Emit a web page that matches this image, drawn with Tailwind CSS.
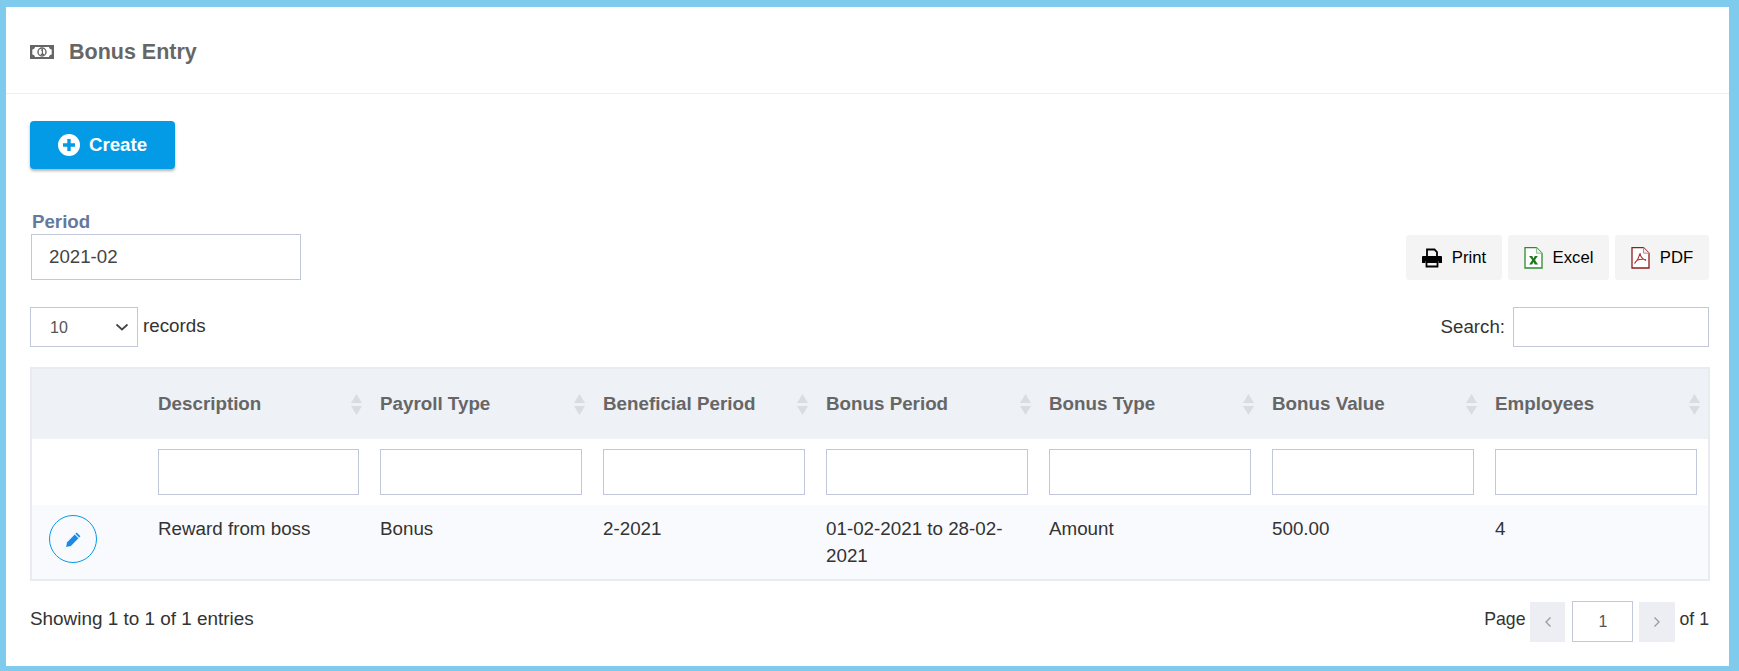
<!DOCTYPE html>
<html lang="en">

<head>
    <meta charset="UTF-8">
    <meta name="viewport" content="width=device-width, initial-scale=1.0">
    <script src="https://cdn.jsdelivr.net/npm/@tailwindcss/browser@4"></script>
    <title>Bonus Entry</title>
</head>

<body class="bg-[#7fcbee] font-['Liberation_Sans',Arial,sans-serif] text-[#333]">

    <div class="h-[671px] pt-[7px] pl-[6px] pr-[10px] pb-[5px] overflow-hidden">
        <div class="h-full bg-white">

            <!-- page title -->
            <div class="h-[87px] border-b border-[#eeeeee] pl-[24px] pt-[4px] flex items-center gap-[15px]">
                <svg width="24" height="14" viewBox="0 0 24 14">
                    <path fill="#666" fill-rule="evenodd" d="M0 0h24v14H0z M5 2 C4.800 3.500 3.800 4.300 2.300 4.500v5C3.800 9.700 4.800 10.500 5 12h14c.2-1.500 1.200-2.300 2.700-2.500v-5C20.200 4.300 19.200 3.500 19 2z" />
                    <circle cx="12" cy="7" r="4" fill="none" stroke="#666" stroke-width="1.400" />
                    <path d="M11 5.300l1.400-.6v4.600M10.700 9.400h3.400" fill="none" stroke="#666" stroke-width="1.200" />
                </svg>
                <h1 class="text-[21.5px] font-bold text-[#666]">Bonus Entry</h1>
            </div>

            <div class="pl-[24px] pr-[20px]">
                <button class="mt-[27px] w-[145px] h-[48px] bg-[#039be5] rounded-[4px] shadow-[0_2px_3px_rgba(0,0,0,0.3)] text-white font-bold text-[18.7px] flex items-center justify-center gap-[9px]">
                    <svg width="22" height="22" viewBox="0 0 22 22">
                        <circle cx="11" cy="11" r="11" fill="#fff" />
                        <path d="M11 5v12M5 11h12" stroke="#039be5" stroke-width="3.400" />
                    </svg>
                    Create
                </button>

                <div class="mt-[40px] flex justify-between items-end">
                    <div class="pl-[1px]">
                        <label class="block pl-[1px] text-[18.7px] leading-[25px] font-bold text-[#64799e]">Period</label>
                        <input type="text" value="2021-02" class="block w-[270px] h-[46px] px-[17px] border border-[#c0c8da] text-[18.7px] text-[#444]">
                    </div>
                    <div class="flex gap-[6px] text-[16.7px] text-black">
                        <button class="w-[96px] h-[45px] bg-[#f4f4f4] rounded-[3px] flex items-center justify-center gap-[10px]">
                            <svg width="20" height="20" viewBox="0 0 20 20">
                                <path d="M5 8V1.500h7.500L15 4v4" fill="none" stroke="#000" stroke-width="1.800" />
                                <path d="M1 8h18a1 1 0 0 1 1 1V15h-3.500v-2h-13v2H0V9a1 1 0 0 1 1-1z" fill="#000" />
                                <path d="M4.500 14h11v4.500h-11z" fill="none" stroke="#000" stroke-width="1.800" />
                            </svg>
                            Print
                        </button>
                        <button class="w-[101px] h-[45px] bg-[#f4f4f4] rounded-[3px] flex items-center justify-center gap-[10px]">
                            <svg width="19" height="22" viewBox="0 0 19 22">
                                <path d="M1 .7h11.500L18 6.200V21H1z" fill="#fff" stroke="#2e8b2e" stroke-width="1.300" />
                                <path d="M12.500 .7v5.500H18" fill="#eee" stroke="#8bc48b" stroke-width="1" />
                                <path d="M5 9h3.200l1.300 2.400L10.800 9h3l-2.800 4 3 4.500h-3.200l-1.300-2.600-1.300 2.600H5.200l3-4.500z" fill="#1c7a1c" />
                            </svg>
                            Excel
                        </button>
                        <button class="w-[94px] h-[45px] bg-[#f4f4f4] rounded-[3px] flex items-center justify-center gap-[10px]">
                            <svg width="19" height="22" viewBox="0 0 19 22">
                                <path d="M1 .7h11.500L18 6.200V21H1z" fill="#fff" stroke="#8b1f1f" stroke-width="1.300" />
                                <path d="M12.500 .7v5.500H18" fill="#eee" stroke="#c98a8a" stroke-width="1" />
                                <path d="M9 6c-.5 3-2 7-5.500 10.500M9 6c.3 3.500 2 6 6 7.500M5.500 13.500c3-1.200 6-1.500 9.500-1" fill="none" stroke="#a33" stroke-width="1.100" />
                            </svg>
                            PDF
                        </button>
                    </div>
                </div>

                <div class="mt-[27px] flex justify-between items-center">
                    <div class="flex items-center gap-[5px] text-[18.8px]">
                        <div class="w-[108px] h-[40px] border border-[#c0c8da] pl-[19px] pr-[8px] flex items-center justify-between text-[16px] text-[#555]">
                            <span class="mt-[1px]">10</span>
                            <svg width="14" height="8" viewBox="0 0 14 8">
                                <path d="M1.500 1.500L7 6.500l5.500-5" fill="none" stroke="#444" stroke-width="1.700" />
                            </svg>
                        </div>
                        <span class="-mt-[2px]">records</span>
                    </div>
                    <div class="flex items-center gap-[8px] text-[18.7px]">
                        <span>Search:</span>
                        <input type="text" class="w-[196px] h-[40px] border border-[#c0c8da]">
                    </div>
                </div>

                <table class="mt-[20px] w-[1678px] table-fixed border-collapse border-[2px] border-[#e8ecf0] text-[18.8px]">
                    <colgroup>
                        <col class="w-[115px]">
                        <col class="w-[222px]">
                        <col class="w-[223px]">
                        <col class="w-[223px]">
                        <col class="w-[223px]">
                        <col class="w-[223px]">
                        <col class="w-[223px]">
                        <col class="w-[226px]">
                    </colgroup>
                    <thead>
                        <tr class="h-[71px] bg-[#eef1f6] text-[#666] text-left">
                            <th></th>
                            <th class="pl-[12px] pr-[6px] font-bold">
                                <div class="flex items-center justify-between">Description
                                    <svg width="11" height="21" viewBox="0 0 11 21"><path d="M5.500 0L11 9H0zM5.500 21L0 12h11z" fill="#d9dce0" /></svg>
                                </div>
                            </th>
                            <th class="pl-[12px] pr-[6px] font-bold">
                                <div class="flex items-center justify-between">Payroll Type
                                    <svg width="11" height="21" viewBox="0 0 11 21"><path d="M5.500 0L11 9H0zM5.500 21L0 12h11z" fill="#d9dce0" /></svg>
                                </div>
                            </th>
                            <th class="pl-[12px] pr-[6px] font-bold">
                                <div class="flex items-center justify-between">Beneficial Period
                                    <svg width="11" height="21" viewBox="0 0 11 21"><path d="M5.500 0L11 9H0zM5.500 21L0 12h11z" fill="#d9dce0" /></svg>
                                </div>
                            </th>
                            <th class="pl-[12px] pr-[6px] font-bold">
                                <div class="flex items-center justify-between">Bonus Period
                                    <svg width="11" height="21" viewBox="0 0 11 21"><path d="M5.500 0L11 9H0zM5.500 21L0 12h11z" fill="#d9dce0" /></svg>
                                </div>
                            </th>
                            <th class="pl-[12px] pr-[6px] font-bold">
                                <div class="flex items-center justify-between">Bonus Type
                                    <svg width="11" height="21" viewBox="0 0 11 21"><path d="M5.500 0L11 9H0zM5.500 21L0 12h11z" fill="#d9dce0" /></svg>
                                </div>
                            </th>
                            <th class="pl-[12px] pr-[6px] font-bold">
                                <div class="flex items-center justify-between">Bonus Value
                                    <svg width="11" height="21" viewBox="0 0 11 21"><path d="M5.500 0L11 9H0zM5.500 21L0 12h11z" fill="#d9dce0" /></svg>
                                </div>
                            </th>
                            <th class="pl-[12px] pr-[8px] font-bold">
                                <div class="flex items-center justify-between">Employees
                                    <svg width="11" height="21" viewBox="0 0 11 21"><path d="M5.500 0L11 9H0zM5.500 21L0 12h11z" fill="#d9dce0" /></svg>
                                </div>
                            </th>
                        </tr>
                    </thead>
                    <tbody>
                        <tr class="h-[66px]">
                            <td></td>
                            <td class="pl-[12px] pr-[9px]"><input type="text" class="block w-full h-[46px] border border-[#c0c8da]"></td>
                            <td class="pl-[12px] pr-[9px]"><input type="text" class="block w-full h-[46px] border border-[#c0c8da]"></td>
                            <td class="pl-[12px] pr-[9px]"><input type="text" class="block w-full h-[46px] border border-[#c0c8da]"></td>
                            <td class="pl-[12px] pr-[9px]"><input type="text" class="block w-full h-[46px] border border-[#c0c8da]"></td>
                            <td class="pl-[12px] pr-[9px]"><input type="text" class="block w-full h-[46px] border border-[#c0c8da]"></td>
                            <td class="pl-[12px] pr-[9px]"><input type="text" class="block w-full h-[46px] border border-[#c0c8da]"></td>
                            <td class="pl-[12px] pr-[11px]"><input type="text" class="block w-full h-[46px] border border-[#c0c8da]"></td>
                        </tr>
                        <tr class="h-[75px] bg-[#f9fafe] align-top leading-[27px]">
                            <td class="pl-[17px] pt-[10px]">
                                <button class="w-[48px] h-[48px] rounded-full border border-[#039be5] flex items-center justify-center">
                                    <svg width="17" height="17" viewBox="0 0 16 16">
                                        <path d="M11 1.500l3.500 3.500-9 9-4.500 1 1-4.500z" fill="#1e88e5" />
                                        <path d="M9.500 3l3.500 3.500" stroke="#f9fafe" stroke-width="1" />
                                    </svg>
                                </button>
                            </td>
                            <td class="pl-[12px] pr-[10px] pt-[10px]">Reward from boss</td>
                            <td class="pl-[12px] pr-[10px] pt-[10px]">Bonus</td>
                            <td class="pl-[12px] pr-[10px] pt-[10px]">2-2021</td>
                            <td class="pl-[12px] pr-[24px] pt-[10px]">01-02-2021 to 28-02-2021</td>
                            <td class="pl-[12px] pr-[10px] pt-[10px]">Amount</td>
                            <td class="pl-[12px] pr-[10px] pt-[10px]">500.00</td>
                            <td class="pl-[12px] pr-[10px] pt-[10px]">4</td>
                        </tr>
                    </tbody>
                </table>

                <div class="mt-[20px] flex justify-between items-center">
                    <span class="-mt-[4px] text-[18.9px]">Showing 1 to 1 of 1 entries</span>
                    <div class="flex items-center text-[17.7px]">
                        <span class="-mt-[4px]">Page</span>
                        <button class="ml-[5px] w-[35px] h-[40px] bg-[#edeef3] flex items-center justify-center">
                            <svg width="8" height="12" viewBox="0 0 8 12"><path d="M6.500 1.500L2 6l4.500 4.500" fill="none" stroke="#9a9a9a" stroke-width="1.300" /></svg>
                        </button>
                        <input type="text" value="1" class="ml-[7px] w-[61px] h-[41px] border border-[#c0c8da] text-center text-[16px] text-[#555]">
                        <button class="ml-[6px] w-[36px] h-[40px] bg-[#edeef3] flex items-center justify-center">
                            <svg width="8" height="12" viewBox="0 0 8 12"><path d="M1.500 1.500L6 6l-4.500 4.500" fill="none" stroke="#9a9a9a" stroke-width="1.300" /></svg>
                        </button>
                        <span class="ml-[4px] -mt-[4px]">of 1</span>
                    </div>
                </div>
            </div>
        </div>
    </div>

</body>

</html>
